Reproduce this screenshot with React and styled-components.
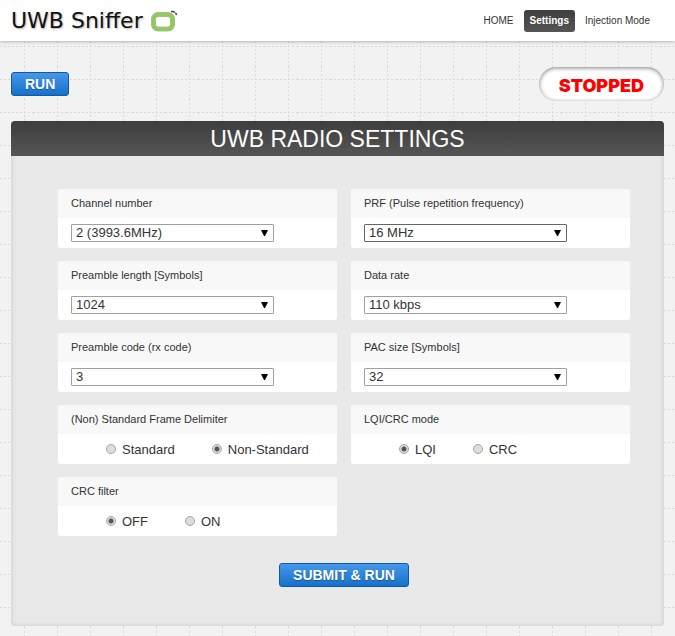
import React, { useState } from "react";
import styled, { createGlobalStyle, css } from "styled-components";

const gridTile = encodeURIComponent(
  `<svg xmlns="http://www.w3.org/2000/svg" width="33" height="33" shape-rendering="crispEdges"><g stroke="#dadada" stroke-dasharray="2 2"><path d="M24.5 0V33"/><path d="M0 13.5H33"/></g></svg>`
);

const GlobalStyle = createGlobalStyle`
  *, *::before, *::after { box-sizing: border-box; }
  body {
    margin: 0;
    min-height: 100vh;
    background: #f2f2f2 url("data:image/svg+xml,${gridTile}");
    color: #333;
    font-family: "Liberation Sans", Arial, sans-serif;
    font-size: 11px;
  }
`;

const darkFill = css`
  background: linear-gradient(#3e3e3e, #555);
  color: #fff;
`;

const Header = styled.header`
  display: flex;
  align-items: center;
  justify-content: space-between;
  height: 41px;
  padding: 0 15px 0 11px;
  background: #fff;
  box-shadow: 0 0 4px rgba(0, 0, 0, 0.4);
`;

const Brand = styled.a`
  display: flex;
  align-items: center;
  gap: 8px;
  color: #111;
  font-family: "DejaVu Sans", Verdana, sans-serif;
  font-size: 22px;
  line-height: 38px;
  text-decoration: none;
  text-shadow: 1px 1px 2px rgba(0, 0, 0, 0.3);
  svg { display: block; }
`;

const Nav = styled.nav`
  display: flex;
  align-items: center;
`;

const NavLink = styled.a`
  padding: 0 10px;
  border-radius: 3px;
  line-height: 22px;
  font-size: 10px;
  color: #333;
  text-decoration: none;
  &[aria-current="page"] {
    ${darkFill}
    padding: 0 6px;
    font-weight: bold;
  }
`;

const StatusBar = styled.div`
  display: flex;
  align-items: center;
  justify-content: space-between;
  padding: 26px 11px 20px;
`;

const BlueButton = styled.button`
  height: 24px;
  padding: 0 13px;
  border: 1px solid #0f5aa3;
  border-radius: 3px;
  background: linear-gradient(#4698e8, #1670cb);
  color: #fff;
  font: bold 14px/22px "Liberation Sans", Arial, sans-serif;
  text-shadow: 0 1px 1px rgba(0, 0, 0, 0.3);
`;

const Status = styled.output`
  padding: 3px 20px 0;
  border-radius: 17px;
  background: #fff;
  box-shadow: inset 0 1px 4px rgba(0, 0, 0, 0.5);
  color: #f00;
  font-family: Inter, "Liberation Sans", sans-serif;
  font-size: 18px;
  font-weight: 900;
  line-height: 31px;
`;

const Panel = styled.main`
  margin: 0 11px 10px;
  border-radius: 4px;
  background: #e9e9e9;
  box-shadow: inset 0 0 5px rgba(0, 0, 0, 0.15);
`;

const PanelTitle = styled.h1`
  ${darkFill}
  margin: 0;
  padding-top: 2px;
  border-radius: 4px 4px 0 0;
  font-size: 23px;
  font-weight: normal;
  line-height: 33px;
  text-align: center;
`;

const Form = styled.form`
  display: flex;
  flex-direction: column;
  align-items: center;
  gap: 27px;
  padding: 33px 34px 39px 47px;
`;

const Fields = styled.div`
  display: grid;
  grid-template-columns: 1fr 1fr;
  gap: 13px 14px;
  width: 100%;
`;

const Card = styled.div`
  min-width: 0;
  border-radius: 3px;
  background: #fff;
  overflow: hidden;
`;

const CardLabel = styled.label`
  display: block;
  padding: 0 13px;
  background: #f8f8f8;
  font-size: 11px;
  line-height: 29px;
`;

const CardBody = styled.div`
  display: flex;
  align-items: center;
  height: 30px;
  padding: 0 13px;
`;

const SelectWrap = styled.div`
  display: grid;
  align-items: center;
  width: 100%;
  max-width: 203px;
  > * { grid-area: 1 / 1; }
  svg { justify-self: end; margin-right: 6px; pointer-events: none; }
`;

const Select = styled.select`
  appearance: none;
  width: 100%;
  height: 18px;
  padding: 0 20px 0 4px;
  border: 1px solid ${(p) => (p.$strong ? "#666" : "#a0a0a0")};
  border-radius: 1px;
  background: #fff;
  color: #333;
  font: 13px/16px "Liberation Sans", Arial, sans-serif;
`;

const RadioRow = styled(CardBody)`
  gap: 37px;
  padding-left: 48px;
`;

const RadioLabel = styled.label`
  display: flex;
  align-items: center;
  gap: 6px;
  font-size: 13px;
`;

const Radio = styled.input`
  appearance: none;
  width: 10px;
  height: 10px;
  margin: 0;
  border: 1px solid #a6a6a6;
  border-radius: 50%;
  background: #ddd;
  &:checked { background: radial-gradient(circle, #555 0 2px, #ddd 3px); }
`;

function LogoMark() {
  return (
    <svg width="28" height="24" viewBox="0 0 28 24" fill="none" aria-hidden="true">
      <rect x="2.5" y="5.5" width="19" height="14.5" rx="4.5" stroke="#b5b5b5" strokeWidth="5" />
      <rect x="2.5" y="5.5" width="19" height="14.5" rx="4.5" stroke="#92cb5c" strokeWidth="4" />
      <path d="M20 2.5Q24.5 2 25.5 6" stroke="#444" strokeWidth="1.5" strokeDasharray="4 0.8" />
    </svg>
  );
}

const selects = {
  channel: ["Channel number", "2 (3993.6MHz)"],
  prf: ["PRF (Pulse repetition frequency)", "16 MHz", true],
  preamble: ["Preamble length [Symbols]", "1024"],
  rate: ["Data rate", "110 kbps"],
  code: ["Preamble code (rx code)", "3"],
  pac: ["PAC size [Symbols]", "32"],
};

const radios = {
  sfd: ["(Non) Standard Frame Delimiter", ["Standard", "Non-Standard"], "Non-Standard"],
  mode: ["LQI/CRC mode", ["LQI", "CRC"], "LQI"],
  filter: ["CRC filter", ["OFF", "ON"], "OFF"],
};

function SelectCard({ id, field: [label, value, strong] }) {
  return (
    <Card>
      <CardLabel htmlFor={id}>{label}</CardLabel>
      <CardBody>
        <SelectWrap>
          <Select id={id} name={id} $strong={strong}>
            <option>{value}</option>
          </Select>
          <svg width="7" height="6" aria-hidden="true"><path d="M0 0H7L4 6H3Z" fill="#000" /></svg>
        </SelectWrap>
      </CardBody>
    </Card>
  );
}

function RadioCard({ id, field: [label, options, initial] }) {
  const [value, setValue] = useState(initial);
  return (
    <Card role="radiogroup" aria-labelledby={id}>
      <CardLabel as="div" id={id}>{label}</CardLabel>
      <RadioRow>
        {options.map((o) => (
          <RadioLabel key={o}>
            <Radio type="radio" name={id} checked={value === o} onChange={() => setValue(o)} />
            {o}
          </RadioLabel>
        ))}
      </RadioRow>
    </Card>
  );
}

export default function App() {
  return (
    <>
      <GlobalStyle />
      <Header>
        <Brand href="#">UWB Sniffer<LogoMark /></Brand>
        <Nav>
          <NavLink href="#">HOME</NavLink>
          <NavLink href="#" aria-current="page">Settings</NavLink>
          <NavLink href="#">Injection Mode</NavLink>
        </Nav>
      </Header>
      <StatusBar>
        <BlueButton type="button">RUN</BlueButton>
        <Status>STOPPED</Status>
      </StatusBar>
      <Panel>
        <PanelTitle>UWB RADIO SETTINGS</PanelTitle>
        <Form onSubmit={(e) => e.preventDefault()}>
          <Fields>
            {Object.entries(selects).map(([id, f]) => <SelectCard key={id} id={id} field={f} />)}
            {Object.entries(radios).map(([id, f]) => <RadioCard key={id} id={id} field={f} />)}
          </Fields>
          <BlueButton type="submit">SUBMIT &amp; RUN</BlueButton>
        </Form>
      </Panel>
    </>
  );
}
